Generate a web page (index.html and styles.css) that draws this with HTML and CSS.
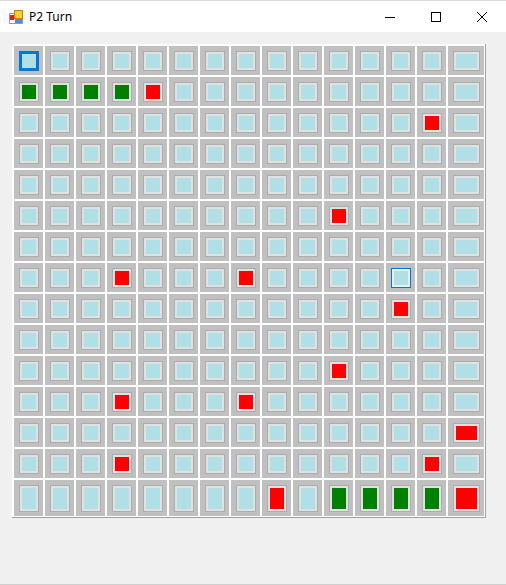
FILE: index.html
```html
<!DOCTYPE html>
<html lang="en">

<head>
    <meta charset="UTF-8">
    <meta name="viewport" content="width=device-width, initial-scale=1">
    <title>P2 Turn</title>
    <link rel="stylesheet" href="styles.css">
</head>

<body>
    <div class="window">
        <div class="titlebar">
            <svg class="app-icon" width="16" height="16" viewBox="0 0 16 16">
                <rect x="1.5" y="4.5" width="13" height="10" fill="#ffffff" stroke="#9a9a9a"/>
                <rect x="2" y="6" width="4" height="5" fill="#e02020"/>
                <rect x="6.5" y="1.5" width="8" height="8" fill="#f8d030" stroke="#d08000"/>
                <rect x="7" y="10" width="7" height="4" fill="#4a8ee0"/>
            </svg>
            <span class="title">P2 Turn</span>
            <div class="controls">
                <div class="ctl">
                    <svg width="10" height="10" viewBox="0 0 10 10"><path d="M0 5.5h10" stroke="#000" stroke-width="1"/></svg>
                </div>
                <div class="ctl">
                    <svg width="10" height="10" viewBox="0 0 10 10"><rect x="0.5" y="0.5" width="9" height="9" fill="none" stroke="#000" stroke-width="1"/></svg>
                </div>
                <div class="ctl">
                    <svg width="10" height="10" viewBox="0 0 10 10"><path d="M0 0L10 10M10 0L0 10" stroke="#000" stroke-width="1"/></svg>
                </div>
            </div>
        </div>

        <div class="client">
            <div class="board" id="board"></div>
        </div>
    </div>

    <script>
        // estado do tabuleiro: [linha, coluna] => cor
        const marcadas = {
            '0,0': 'focus',
            '1,0': 'green', '1,1': 'green', '1,2': 'green', '1,3': 'green', '1,4': 'red',
            '2,13': 'red',
            '5,10': 'red',
            '7,3': 'red', '7,7': 'red', '7,12': 'hover',
            '8,12': 'red',
            '10,10': 'red',
            '11,3': 'red', '11,7': 'red',
            '12,14': 'red',
            '13,3': 'red', '13,13': 'red',
            '14,8': 'red', '14,10': 'green', '14,11': 'green', '14,12': 'green', '14,13': 'green', '14,14': 'red'
        };

        const board = document.getElementById('board');
        for (let r = 0; r < 15; r++) {
            for (let c = 0; c < 15; c++) {
                const cell = document.createElement('div');
                cell.className = 'cell';
                const btn = document.createElement('div');
                btn.className = 'btn';
                const estado = marcadas[r + ',' + c];
                if (estado) btn.classList.add(estado);
                cell.appendChild(btn);
                board.appendChild(cell);
            }
        }
    </script>
</body>

</html>
```

FILE: styles.css
```css
body {
    margin: 0;
    background-color: #f0f0f0;
    font-family: "Noto Sans", "Liberation Sans", sans-serif;
}

.window {
    height: 585px;
    box-sizing: border-box;
    border-bottom: 1px solid #cfcfcf;
}

.titlebar {
    display: flex;
    align-items: center;
    height: 31px;
    background-color: #ffffff;
    border-top: 1px solid #dadada;
    padding-right: 1px;
}

.app-icon {
    margin-left: 8px;
    margin-right: 5px;
}

.title {
    font-size: 12px;
    color: #000000;
}

.controls {
    display: flex;
    margin-left: auto;
    height: 100%;
}

.ctl {
    width: 46px;
    display: flex;
    align-items: center;
    justify-content: center;
}

.client {
    padding: 12px 0 0 12px;
}

.board {
    display: grid;
    grid-template-columns: repeat(14, 29px) 36px;
    grid-template-rows: repeat(14, 29px) 36px;
    gap: 2px;
    padding: 2px 1px 1px 2px;
    width: max-content;
    background-color: #ffffff;
    border-right: 1px solid #a0a0a0;
    border-bottom: 1px solid #a0a0a0;
}

.cell {
    background-color: #c0c0c0;
    padding: 5px 4px 4px 5px;
}

.btn {
    height: 100%;
    box-sizing: border-box;
    border: 1px solid #adadad;
    background-color: #b0e0e6;
    box-shadow: inset 0 0 0 2px #e1e1e1;
}

.btn.green {
    background-color: #008000;
}

.btn.red {
    background-color: #ff0000;
}

.btn.hover {
    border-color: #0078d7;
    box-shadow: inset 0 0 0 2px #e5f1fb;
}

.btn.focus {
    border-color: #0078d7;
    box-shadow: inset 0 0 0 2px #0078d7;
}
```
